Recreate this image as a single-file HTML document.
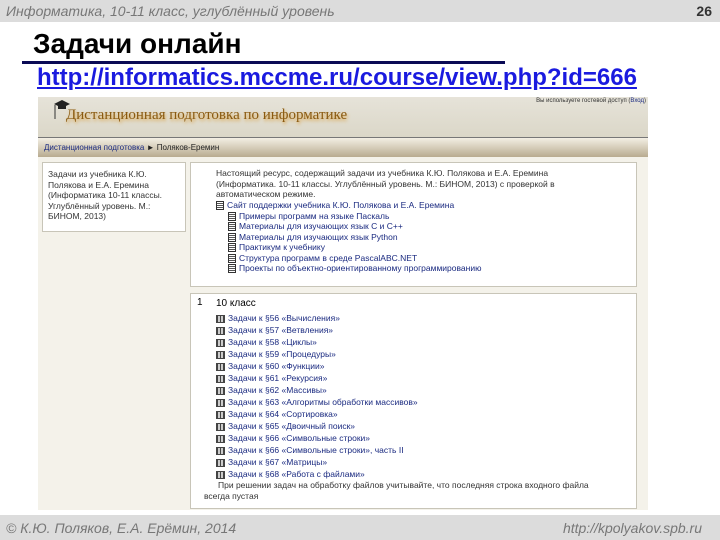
<!DOCTYPE html>
<html><head><meta charset="utf-8"><style>
*{margin:0;padding:0;box-sizing:border-box}
body{width:720px;height:540px;background:#fff;position:relative;overflow:hidden;font-family:"Liberation Sans",sans-serif}
.top{position:absolute;left:0;top:0;width:720px;height:22px;background:#dcdcdc;}
.top .l{position:absolute;left:6px;top:3px;font-size:14px;font-style:italic;color:#777}
.top .r{position:absolute;right:8px;top:3px;font-size:14px;font-weight:bold;color:#333}
.bot{position:absolute;left:0;top:515px;width:720px;height:25px;background:#dcdcdc;}
.bot .l{position:absolute;left:6px;top:5px;font-size:14px;font-style:italic;color:#777}
.bot .r{position:absolute;right:18px;top:5px;font-size:14px;font-style:italic;color:#777}
h1{position:absolute;left:33px;top:28px;font-size:28px;font-weight:bold;color:#000}
.line{position:absolute;left:22px;top:61px;width:483px;height:3px;background:#0a0a55}
.url{position:absolute;left:37px;top:64px;font-size:24px;font-weight:bold;color:#1a1adf;text-decoration:underline}
.shot{position:absolute;left:38px;top:97px;width:610px;height:413px;background:#f4f2ea}
.ban{position:absolute;left:0;top:0;width:610px;height:40px;background:linear-gradient(#e6e3d9,#dbd7c8)}
.ban .t{position:absolute;left:28px;top:10px;font-family:"Liberation Serif",serif;font-size:15px;color:#8a5a10;text-shadow:1px 2px 3px #d9a040}
.ban .s{position:absolute;right:2px;top:1px;font-size:6px;color:#333}
.nav{position:absolute;left:0;top:40px;width:610px;height:20px;background:linear-gradient(#f3efe4,#b8ab90);border-top:1px solid #777;font-size:8px;padding:5px 6px;color:#222}
.nav b{color:#1a2a80;font-weight:normal}
.box{position:absolute;background:#fff;border:1px solid #c8c5b8;font-size:8.5px;color:#333}
.ic{display:inline-block;width:8px;height:9px;border:1px solid #333;background:repeating-linear-gradient(#fff 0 1px,#555 1px 2px);vertical-align:middle;margin-right:3px}
.gr{display:inline-block;width:9px;height:8px;background:repeating-linear-gradient(90deg,#444 0 1px,#ccc 1px 3px),#bbb;border:1px solid #444;vertical-align:middle;margin-right:3px}
.a{color:#1a2a80}
.rw{height:12px;line-height:12px;white-space:nowrap}
</style></head><body>
<div class="top"><span class="l">Информатика, 10-11 класс, углублённый уровень</span><span class="r">26</span></div>
<h1>Задачи онлайн</h1>
<div class="line"></div>
<div class="url">http://informatics.mccme.ru/course/view.php?id=666</div>
<div class="shot">
 <div class="ban"><span class="t">Дистанционная подготовка по информатике</span><span class="s">Вы используете гостевой доступ (<span class="a">Вход</span>)</span>
 <svg style="position:absolute;left:14px;top:2px" width="20" height="22"><polygon points="2,5 10,1 18,5 10,9" fill="#222"/><rect x="6" y="6" width="8" height="4" fill="#222"/><line x1="3" y1="6" x2="3" y2="20" stroke="#333"/></svg></div>
 <div class="nav"><b>Дистанционная подготовка</b> ► Поляков-Еремин</div>
 <div class="box" style="left:4px;top:65px;width:144px;height:70px;padding:6px 5px;line-height:10.5px">Задачи из учебника К.Ю. Полякова и Е.А. Еремина (Информатика 10-11 классы. Углублённый уровень. М.: БИНОМ, 2013)</div>
 <div class="box" style="left:152px;top:65px;width:447px;height:125px;padding:5px 50px 0 25px;line-height:10.5px">
  Настоящий ресурс, содержащий задачи из учебника К.Ю. Полякова и Е.А. Еремина (Информатика. 10-11 классы. Углублённый уровень. М.: БИНОМ, 2013) с проверкой в автоматическом режиме.<br>
  <div class="rw" style="height:11px;line-height:11px"><span class="ic"></span><span class="a">Сайт поддержки учебника К.Ю. Полякова и Е.А. Еремина</span></div>
  <div style="padding-left:12px;line-height:10.5px">
  <div class="rw" style="height:10.5px;line-height:10.5px"><span class="ic"></span><span class="a">Примеры программ на языке Паскаль</span></div>
  <div class="rw" style="height:10.5px;line-height:10.5px"><span class="ic"></span><span class="a">Материалы для изучающих язык С и С++</span></div>
  <div class="rw" style="height:10.5px;line-height:10.5px"><span class="ic"></span><span class="a">Материалы для изучающих язык Python</span></div>
  <div class="rw" style="height:10.5px;line-height:10.5px"><span class="ic"></span><span class="a">Практикум к учебнику</span></div>
  <div class="rw" style="height:10.5px;line-height:10.5px"><span class="ic"></span><span class="a">Структура программ в среде PascalABC.NET</span></div>
  <div class="rw" style="height:10.5px;line-height:10.5px"><span class="ic"></span><span class="a">Проекты по объектно-ориентированному программированию</span></div>
  </div></div>
 <div class="box" style="left:152px;top:196px;width:447px;height:216px;padding:4px 20px 0 25px">
  <span style="position:absolute;left:6px;top:3px;font-size:10px;color:#000">1</span>
  <div style="font-size:10px;color:#000;height:14px">10 класс</div>
  <div class="rw"><span class="gr"></span><span class="a">Задачи к §56 «Вычисления»</span></div>
  <div class="rw"><span class="gr"></span><span class="a">Задачи к §57 «Ветвления»</span></div>
  <div class="rw"><span class="gr"></span><span class="a">Задачи к §58 «Циклы»</span></div>
  <div class="rw"><span class="gr"></span><span class="a">Задачи к §59 «Процедуры»</span></div>
  <div class="rw"><span class="gr"></span><span class="a">Задачи к §60 «Функции»</span></div>
  <div class="rw"><span class="gr"></span><span class="a">Задачи к §61 «Рекурсия»</span></div>
  <div class="rw"><span class="gr"></span><span class="a">Задачи к §62 «Массивы»</span></div>
  <div class="rw"><span class="gr"></span><span class="a">Задачи к §63 «Алгоритмы обработки массивов»</span></div>
  <div class="rw"><span class="gr"></span><span class="a">Задачи к §64 «Сортировка»</span></div>
  <div class="rw"><span class="gr"></span><span class="a">Задачи к §65 «Двоичный поиск»</span></div>
  <div class="rw"><span class="gr"></span><span class="a">Задачи к §66 «Символьные строки»</span></div>
  <div class="rw"><span class="gr"></span><span class="a">Задачи к §66 «Символьные строки», часть II</span></div>
  <div class="rw"><span class="gr"></span><span class="a">Задачи к §67 «Матрицы»</span></div>
  <div class="rw"><span class="gr"></span><span class="a">Задачи к §68 «Работа с файлами»</span></div>
  <div style="line-height:11px;text-indent:14px;margin-left:-12px">При решении задач на обработку файлов учитывайте, что последняя строка входного файла всегда пустая</div>
 </div>
</div>
<div class="bot"><span class="l">© К.Ю. Поляков, Е.А. Ерёмин, 2014</span><span class="r">http://kpolyakov.spb.ru</span></div>
</body></html>
